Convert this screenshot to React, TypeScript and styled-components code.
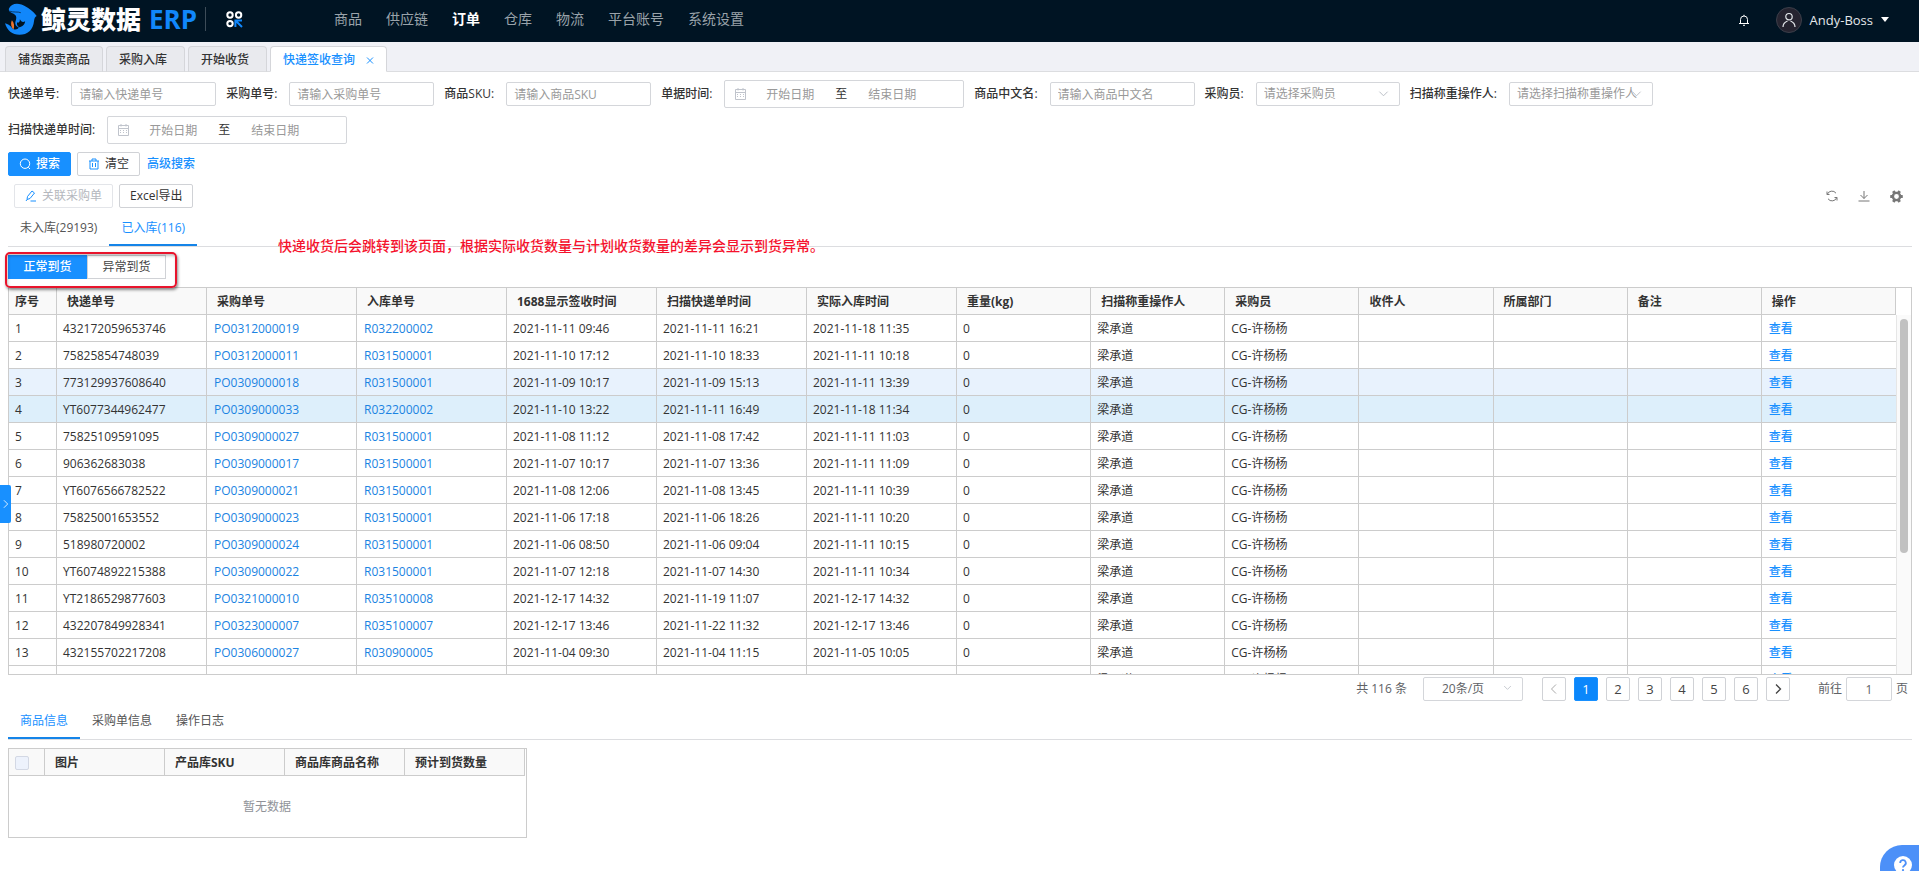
import React from "react";
import styled, { createGlobalStyle, css } from "styled-components";

const BLUE = "#1890ff";
const LINE = "#cccccc";
const FONT = `"Open Sans", "Noto Sans CJK SC", sans-serif`;

const GlobalStyle = createGlobalStyle`
  *, *::before, *::after { box-sizing: border-box; }
  body { margin: 0; background: #fff; color: #333; font: 12px/18px ${FONT}; }
  button, input, select { font: inherit; color: inherit; margin: 0; }
  button { cursor: pointer; padding: 0; background: none; border: 0; }
  a { text-decoration: none; }
  svg { display: block; flex: none; }
`;

/* ---------- header ---------- */
const Header = styled.header`
  display: flex;
  align-items: center;
  height: 42px;
  padding: 0 30px 0 5px;
  background: #001423;
  color: #fff;
`;
const Brand = styled.a`
  display: flex;
  align-items: center;
  gap: 4px;
  height: 24px;
  margin-bottom: 4px;
  padding-right: 8px;
  border-right: 1px solid #3d4c58;
  color: #fff;
  font-size: 25px;
  line-height: 24px;
  font-weight: 900;
  white-space: nowrap;
`;
const BrandAccent = styled.span`
  margin-left: 4px;
  color: #1187fb;
  font-size: 26px;
  font-weight: 700;
`;
const AppsButton = styled.button`
  margin: 0 91px 4px 20px;
`;
const Nav = styled.nav`
  display: flex;
  gap: 24px;
  margin-bottom: 4px;
`;
const NavLink = styled.a<{ $active?: boolean }>`
  font-size: 14px;
  line-height: 20px;
  white-space: nowrap;
  color: ${(p) => (p.$active ? "#fff" : "#9aa3aa")};
  font-weight: ${(p) => (p.$active ? 700 : 400)};
`;
const HeaderRight = styled.div`
  display: flex;
  align-items: center;
  gap: 26px;
  margin: 0 0 3px auto;
`;
const UserButton = styled.button`
  display: flex;
  align-items: center;
  gap: 8px;
  color: #e4e8eb;
  font-size: 13px;
`;
const Avatar = styled.span`
  display: grid;
  place-items: center;
  width: 26px;
  height: 26px;
  border: 1px solid #3c3f4a;
  border-radius: 50%;
  background: #262430;
`;
const Caret = styled.span`
  border: 4px solid transparent;
  border-top: 5px solid #fff;
  border-bottom: 0;
`;

/* ---------- page tabs ---------- */
const PageTabs = styled.div`
  display: flex;
  align-items: flex-end;
  gap: 3px;
  height: 30px;
  padding: 0 5px;
  background: #f0f1f6;
  box-shadow: inset 0 -1px #dcdde0;
`;
const PageTab = styled.button<{ $active?: boolean }>`
  display: flex;
  align-items: center;
  gap: 11px;
  min-width: 79px;
  height: 26px;
  padding: 1px 12px 0;
  border: 1px solid #d5d6da;
  border-bottom-color: #dcdde0;
  border-radius: 4px 4px 0 0;
  background: #e9eaee;
  font-weight: 500;
  white-space: nowrap;
  ${(p) =>
    p.$active &&
    css`
      background: #fff;
      border-bottom-color: #fff;
      color: ${BLUE};
    `}
`;

/* ---------- filters ---------- */
const Content = styled.main`
  padding: 8px 7px 0 8px;
`;
const Filters = styled.form`
  display: flex;
  flex-wrap: wrap;
  gap: 8px 10px;
`;
const Field = styled.div`
  display: flex;
  align-items: center;
  gap: 12px;
  height: 28px;
`;
const FieldLabel = styled.label`
  white-space: nowrap;
  font-weight: 500;
`;
const box = css`
  border: 1px solid #d4d6da;
  border-radius: 2px;
  background: #fff;
`;
const TextInput = styled.input`
  ${box}
  width: 145px;
  height: 24px;
  padding: 0 7px;
  outline: none;
  &::placeholder { color: #999; opacity: 1; }
`;
const SelectWrap = styled.span<{ $w: number }>`
  position: relative;
  width: ${(p) => p.$w}px;
  svg { position: absolute; right: 11px; top: 6px; color: #b6bac2; pointer-events: none; }
`;
const Select = styled.select<{ $center?: boolean }>`
  ${box}
  display: block;
  appearance: none;
  width: 100%;
  height: 24px;
  padding: 0 7px;
  color: ${(p) => (p.$center ? "#606266" : "#999")};
  padding-left: ${(p) => (p.$center ? 18 : 7)}px;
  outline: none;
`;
const DateRange = styled.div`
  ${box}
  display: flex;
  align-items: center;
  width: 240px;
  height: 28px;
  padding-left: 10px;
`;
const DateInput = styled.input`
  width: 78px;
  height: 24px;
  padding: 0;
  border: 0;
  outline: none;
  text-align: center;
  background: none;
  &::placeholder { color: #999; opacity: 1; }
`;
const DateIcon = styled.span`
  margin-right: 5px;
`;
const DateTo = styled.span`
  width: 24px;
  text-align: center;
`;

/* ---------- buttons ---------- */
const ButtonRow = styled.div`
  display: flex;
  align-items: center;
  gap: 6px;
  margin-top: 8px;
`;
const ActionRow = styled(ButtonRow)`
  padding: 0 9px 0 6px;
`;
const Button = styled.button<{ $primary?: boolean }>`
  display: flex;
  align-items: center;
  gap: 5px;
  height: 24px;
  padding: 0 10px;
  border: 1px solid #d0d2d6;
  border-radius: 2px;
  background: #fff;
  white-space: nowrap;
  svg { color: ${BLUE}; }
  ${(p) =>
    p.$primary &&
    css`
      border-color: ${BLUE};
      background: ${BLUE};
      color: #fff;
      font-weight: 500;
      svg { color: #fff; }
    `}
  &:disabled {
    color: #b4b7bd;
    border-color: #e3e5e9;
  }
`;
const AdvancedLink = styled.a`
  margin-left: 1px;
  color: ${BLUE};
  font-weight: 500;
`;
const Tools = styled.div`
  display: flex;
  gap: 18px;
  margin-left: auto;
  color: #777;
`;
const IconButton = styled.button`
  display: grid;
  place-items: center;
  width: 14px;
  height: 14px;
`;

/* ---------- tabs ---------- */
const TabBar = styled.div`
  position: relative;
  display: flex;
  height: 39px;
  border-bottom: 1px solid #dcdde0;
`;
const Tab = styled.button<{ $active?: boolean }>`
  height: 38px;
  padding: 3px 12px 0;
  border-bottom: 2px solid ${(p) => (p.$active ? "#1584e8" : "transparent")};
  color: ${(p) => (p.$active ? BLUE : "#555")};
  white-space: nowrap;
`;
const Note = styled.p`
  position: absolute;
  left: 270px;
  bottom: -10px;
  margin: 0;
  color: #f5122d;
  font-size: 14px;
  line-height: 20px;
  font-weight: 500;
  white-space: nowrap;
`;
const Segments = styled.div`
  position: relative;
  display: flex;
  width: 158px;
  margin: 8px 0;
`;
const Segment = styled.button<{ $active?: boolean }>`
  flex: 1;
  height: 24px;
  border: 1px solid ${(p) => (p.$active ? BLUE : "#d0d2d6")};
  background: ${(p) => (p.$active ? BLUE : "#fff")};
  color: ${(p) => (p.$active ? "#fff" : "#444")};
  font-weight: ${(p) => (p.$active ? 500 : 400)};
`;
const Highlight = styled.span`
  position: absolute;
  inset: -3px -11px -9px -3px;
  border: 2px solid #e8142c;
  border-radius: 5px;
  box-shadow: 1px 2px 3px rgba(0, 0, 0, 0.45), inset 1px 2px 3px rgba(0, 0, 0, 0.25);
  pointer-events: none;
`;

/* ---------- data table ---------- */
const Frame = styled.div`
  display: flex;
  height: 388px;
  border: 1px solid ${LINE};
`;
const Clip = styled.div`
  flex: 1;
  min-width: 0;
  overflow: hidden;
`;
const Table = styled.table`
  width: 100%;
  table-layout: fixed;
  border-collapse: separate;
  border-spacing: 0;
`;
const Th = styled.th<{ $first?: boolean }>`
  height: 27px;
  padding: 2px 0 0 ${(p) => (p.$first ? 6 : 10)}px;
  border-bottom: 1px solid ${LINE};
  border-right: 1px solid ${LINE};
  background: #f9f9f9;
  text-align: left;
  font-weight: 700;
  white-space: nowrap;
`;
const Tr = styled.tr<{ $tone?: string }>`
  background: ${(p) => p.$tone || "#fff"};
`;
const Td = styled.td<{ $link?: boolean }>`
  height: 27px;
  padding: 2px 0 0 ${(p) => (p.$link ? 7 : 6)}px;
  border-bottom: 1px solid ${LINE};
  border-right: 1px solid ${LINE};
  white-space: nowrap;
  &:last-child { border-right: 0; }
`;
const CodeLink = styled.a`
  color: #1b83e2;
`;
const ViewLink = styled.a`
  color: ${BLUE};
  font-weight: 500;
`;
const Gutter = styled.div`
  display: flex;
  flex-direction: column;
  width: 15px;
`;
const GutterHead = styled.div`
  height: 27px;
`;
const Track = styled.div`
  flex: 1;
  padding: 4px 3px 0;
  border-left: 1px solid #e6e6e6;
  background: #fafafa;
`;
const Thumb = styled.div`
  height: 234px;
  border-radius: 4px;
  background: #c1c1c1;
`;

/* ---------- pagination ---------- */
const Pagination = styled.nav`
  display: flex;
  justify-content: flex-end;
  align-items: center;
  margin-top: 2px;
  padding-right: 4px;
  color: #606266;
`;
const Pages = styled.div`
  display: flex;
  gap: 8px;
  margin: 0 28px 0 19px;
`;
const PageButton = styled.button<{ $active?: boolean }>`
  display: grid;
  place-items: center;
  width: 24px;
  height: 24px;
  border: 1px solid ${(p) => (p.$active ? BLUE : "#d0d2d6")};
  border-radius: 2px;
  background: ${(p) => (p.$active ? "#0b87fb" : "#fff")};
  color: ${(p) => (p.$active ? "#fff" : "#444")};
  font-size: 13px;
  &:disabled { color: #aaa; }
`;
const Total = styled.span`
  margin-right: 16px;
`;
const Jump = styled.label`
  display: flex;
  align-items: center;
  gap: 4px;
`;
const JumpInput = styled(TextInput)`
  width: 46px;
  text-align: center;
`;

/* ---------- detail table ---------- */
const DetailFrame = styled.div`
  width: 519px;
  margin-top: 8px;
  border: 1px solid ${LINE};
  padding-right: 1px;
  background: #fff;
`;
const EmptyCell = styled.td`
  height: 61px;
  padding: 0;
  text-align: center;
  color: #909399;
`;
const Check = styled.input`
  display: block;
  appearance: none;
  width: 14px;
  height: 14px;
  margin: 0;
  border: 1px solid #d3d8e4;
  border-radius: 2px;
  background: #edf2fc;
`;

/* ---------- floating parts ---------- */
const SideHandle = styled.button`
  position: fixed;
  left: 0;
  top: 485px;
  display: grid;
  place-items: center;
  width: 11px;
  height: 38px;
  border-radius: 0 2px 2px 0;
  background: ${BLUE};
  color: #fff;
`;
const Help = styled.button`
  position: fixed;
  right: 0;
  bottom: 0;
  width: 39px;
  height: 26px;
  padding: 11px 0 0 14px;
  border-radius: 22px 0 0 0;
  background: #4c90f8;
  overflow: hidden;
`;

/* ---------- icons ---------- */
type IconProps = { size?: number; d: string; w?: number; box?: number };
const Icon = ({ size = 12, d, w = 1, box: b = 12 }: IconProps) => (
  <svg width={size} height={size} viewBox={`0 0 ${b} ${b}`} fill="none" stroke="currentColor" strokeWidth={w} aria-hidden="true">
    <path d={d} />
  </svg>
);
const Whale = () => (
  <svg width="32" height="34" viewBox="15 6 97 102" aria-hidden="true">
    <path
      fill="#1187fb"
      d="M27 25C33 12 48 7 65 13C84 20 101 34 111 48C106 50 104 55 103 63C101 89 83 105 59 105C37 105 21 92 15 70C24 72 32 78 37 85C43 91 53 90 57 83C49 80 44 73 47 64C51 53 50 46 41 41C32 37 25 34 27 25Z"
    />
    <path fill="#001423" d="M58 82C52 79 50 73 52 67C57 70 60 66 60 58C64 65 69 69 76 64C75 74 68 81 58 82Z" />
    <path fill="none" stroke="#001423" strokeWidth="2" d="M28 33C42 38 54 34 63 38" />
    <path fill="#f0752c" d="M36 61C43 68 44 80 41 89C34 83 31 71 36 61Z" />
  </svg>
);
const AppsIcon = () => (
  <svg width="17" height="17" viewBox="0 0 17 17" fill="none" stroke="#fff" strokeWidth="2" aria-hidden="true">
    <circle cx="4" cy="4" r="2.7" />
    <circle cx="12.6" cy="4" r="2.7" />
    <circle cx="4" cy="12.6" r="2.7" />
    <path stroke="#1187fb" d="M16 16L10.5 10.5M9.4 16V9.4H16" />
  </svg>
);
const CalendarIcon = () => (
  <svg width="11" height="12" viewBox="0 0 11 12" fill="none" stroke="#c0c4cc" aria-hidden="true">
    <path d="M.5 1.5h10v10H.5zM.5 4.5h10M3 0v2.5M8 0v2.5" />
    <path d="M2 6.5h7M2 8.5h7" strokeDasharray="1 2" />
  </svg>
);
const Gear = () => (
  <svg width="13" height="13" viewBox="0 0 13 13" aria-hidden="true">
    <circle cx="6.5" cy="6.5" r="3.6" fill="none" stroke="currentColor" strokeWidth="2.4" />
    {[30, 90, 150, 210, 270, 330].map((a) => (
      <rect key={a} x="5" y="0.2" width="3" height="2.6" rx="0.6" fill="currentColor" transform={`rotate(${a} 6.5 6.5)`} />
    ))}
  </svg>
);
const ARROW_DOWN = "M1.5 4l4.5 4.5L10.500 4";

/* ---------- data ---------- */
const NAV = ["商品", "供应链", "订单", "仓库", "物流", "平台账号", "系统设置"];
const COLUMNS = ["序号", "快递单号", "采购单号", "入库单号", "1688显示签收时间", "扫描快递单时间", "实际入库时间", "重量(kg)", "扫描称重操作人", "采购员", "收件人", "所属部门", "备注", "操作"];
const WIDTHS = [48, 150, 150, 150, 150, 150, 150];
const ROWS = [
  ["432172059653746", "PO0312000019", "R032200002", "2021-11-11 09:46", "2021-11-11 16:21", "2021-11-18 11:35"],
  ["75825854748039", "PO0312000011", "R031500001", "2021-11-10 17:12", "2021-11-10 18:33", "2021-11-11 10:18"],
  ["773129937608640", "PO0309000018", "R031500001", "2021-11-09 10:17", "2021-11-09 15:13", "2021-11-11 13:39"],
  ["YT6077344962477", "PO0309000033", "R032200002", "2021-11-10 13:22", "2021-11-11 16:49", "2021-11-18 11:34"],
  ["75825109591095", "PO0309000027", "R031500001", "2021-11-08 11:12", "2021-11-08 17:42", "2021-11-11 11:03"],
  ["906362683038", "PO0309000017", "R031500001", "2021-11-07 10:17", "2021-11-07 13:36", "2021-11-11 11:09"],
  ["YT6076566782522", "PO0309000021", "R031500001", "2021-11-08 12:06", "2021-11-08 13:45", "2021-11-11 10:39"],
  ["75825001653552", "PO0309000023", "R031500001", "2021-11-06 17:18", "2021-11-06 18:26", "2021-11-11 10:20"],
  ["518980720002", "PO0309000024", "R031500001", "2021-11-06 08:50", "2021-11-06 09:04", "2021-11-11 10:15"],
  ["YT6074892215388", "PO0309000022", "R031500001", "2021-11-07 12:18", "2021-11-07 14:30", "2021-11-11 10:34"],
  ["YT2186529877603", "PO0321000010", "R035100008", "2021-12-17 14:32", "2021-11-19 11:07", "2021-12-17 14:32"],
  ["432207849928341", "PO0323000007", "R035100007", "2021-12-17 13:46", "2021-11-22 11:32", "2021-12-17 13:46"],
  ["432155702217208", "PO0306000027", "R030900005", "2021-11-04 09:30", "2021-11-04 11:15", "2021-11-05 10:05"],
  ["432155702217209", "PO0306000026", "R030900004", "2021-11-04 09:30", "2021-11-04 11:15", "2021-11-05 10:05"],
];
const TONES: Record<number, string> = { 2: "#e8f2fd", 3: "#ddeffb" };

const TextField = ({ id, label }: { id: string; label: string }) => (
  <Field>
    <FieldLabel htmlFor={id}>{label}:</FieldLabel>
    <TextInput id={id} placeholder={`请输入${label}`} />
  </Field>
);
const SelectField = ({ id, label }: { id: string; label: string }) => (
  <Field>
    <FieldLabel htmlFor={id}>{label}:</FieldLabel>
    <SelectWrap $w={144}>
      <Select id={id}>
        <option>{`请选择${label}`}</option>
      </Select>
      <Icon size={11} d={ARROW_DOWN} />
    </SelectWrap>
  </Field>
);
const DateField = ({ id, label }: { id: string; label: string }) => (
  <Field>
    <FieldLabel htmlFor={id}>{label}:</FieldLabel>
    <DateRange>
      <DateIcon><CalendarIcon /></DateIcon>
      <DateInput id={id} placeholder="开始日期" />
      <DateTo>至</DateTo>
      <DateInput aria-label={`${label}结束日期`} placeholder="结束日期" />
    </DateRange>
  </Field>
);

export default function App() {
  return (
    <>
      <GlobalStyle />
      <Header>
        <Brand href="#">
          <Whale />
          <span>鲸灵数据</span>
          <BrandAccent>ERP</BrandAccent>
        </Brand>
        <AppsButton aria-label="应用"><AppsIcon /></AppsButton>
        <Nav>
          {NAV.map((n) => (
            <NavLink key={n} href="#" $active={n === "订单"}>{n}</NavLink>
          ))}
        </Nav>
        <HeaderRight>
          <button aria-label="通知">
            <Icon d="M1 9.500h10M2.500 9.500V5.500a3.500 3.500 0 0 1 7 0v4M6 2V.8M5 11.300h2" />
          </button>
          <UserButton>
            <Avatar><Icon size={16} box={16} w={1.2} d="M8 1.500a3.200 3.200 0 1 1 0 6.400a3.200 3.200 0 1 1 0-6.400zM2 15c0-3 2-5 4.500-6M14 15c0-3-2-5-4.500-6" /></Avatar>
            Andy-Boss
            <Caret />
          </UserButton>
        </HeaderRight>
      </Header>

      <PageTabs>
        <PageTab>铺货跟卖商品</PageTab>
        <PageTab>采购入库</PageTab>
        <PageTab>开始收货</PageTab>
        <PageTab $active>
          快递签收查询
          <Icon size={8} box={8} d="M1 1.500l6 6M7 1.500l-6 6" />
        </PageTab>
      </PageTabs>

      <Content>
        <Filters>
          <TextField id="express" label="快递单号" />
          <TextField id="purchase" label="采购单号" />
          <TextField id="sku" label="商品SKU" />
          <DateField id="docTime" label="单据时间" />
          <TextField id="cnName" label="商品中文名" />
          <SelectField id="buyer" label="采购员" />
          <SelectField id="operator" label="扫描称重操作人" />
          <DateField id="scanTime" label="扫描快递单时间" />
        </Filters>

        <ButtonRow>
          <Button $primary>
            <Icon d="M6 1a4.700 4.700 0 1 1 0 9.400a4.700 4.700 0 1 1 0-9.400zM9.300 9.300l1.700 1.700" />
            搜索
          </Button>
          <Button>
            <Icon d="M1 3h10M4 3V1h4v2M2 3v8h8V3M4.500 5v4M7.500 5v4" />
            清空
          </Button>
          <AdvancedLink href="#">高级搜索</AdvancedLink>
        </ButtonRow>

        <ActionRow>
          <Button disabled>
            <Icon d="M2 9.500L2.500 6.500 7 1l2.500 2L5 8.500zM5.500 11H11M1 11l1-1.500" />
            关联采购单
          </Button>
          <Button>Excel导出</Button>
          <Tools>
            <IconButton aria-label="刷新">
              <Icon d="M1.200 4.500A5 5 0 0 1 10 3.200M10.800 7.500A5 5 0 0 1 2 8.800M1 1.500v3h2.500M11 10.500v-3H8.500" />
            </IconButton>
            <IconButton aria-label="下载">
              <Icon d="M6 1v7.500M2.500 5L6 8.500 9.500 5M.5 11h11" />
            </IconButton>
            <IconButton aria-label="设置"><Gear /></IconButton>
          </Tools>
        </ActionRow>

        <TabBar>
          <Tab>未入库(29193)</Tab>
          <Tab $active>已入库(116)</Tab>
          <Note>快递收货后会跳转到该页面，根据实际收货数量与计划收货数量的差异会显示到货异常。</Note>
        </TabBar>

        <Segments>
          <Segment $active>正常到货</Segment>
          <Segment>异常到货</Segment>
          <Highlight />
        </Segments>

        <Frame>
          <Clip>
            <Table>
              <colgroup>
                {COLUMNS.map((c, i) => <col key={c} width={WIDTHS[i]} />)}
              </colgroup>
              <thead>
                <tr>{COLUMNS.map((c, i) => <Th key={c} $first={i === 0}>{c}</Th>)}</tr>
              </thead>
              <tbody>
                {ROWS.map((r, i) => (
                  <Tr key={r[0]} $tone={TONES[i]}>
                    <Td>{i + 1}</Td>
                    <Td>{r[0]}</Td>
                    <Td $link><CodeLink href="#">{r[1]}</CodeLink></Td>
                    <Td $link><CodeLink href="#">{r[2]}</CodeLink></Td>
                    <Td>{r[3]}</Td>
                    <Td>{r[4]}</Td>
                    <Td>{r[5]}</Td>
                    <Td>0</Td>
                    <Td>梁承道</Td>
                    <Td>CG-许杨杨</Td>
                    <Td />
                    <Td />
                    <Td />
                    <Td $link><ViewLink href="#">查看</ViewLink></Td>
                  </Tr>
                ))}
              </tbody>
            </Table>
          </Clip>
          <Gutter>
            <GutterHead />
            <Track><Thumb /></Track>
          </Gutter>
        </Frame>

        <Pagination>
          <Total>共 116 条</Total>
          <SelectWrap $w={100}>
            <Select $center aria-label="每页条数"><option>20条/页</option></Select>
            <Icon size={9} d={ARROW_DOWN} />
          </SelectWrap>
          <Pages>
            <PageButton disabled aria-label="上一页"><Icon d="M8 1.500L3.500 6 8 10.500" /></PageButton>
            {[1, 2, 3, 4, 5, 6].map((n) => (
              <PageButton key={n} $active={n === 1}>{n}</PageButton>
            ))}
            <PageButton aria-label="下一页"><Icon w={1.3} d="M4 1.500L8.500 6 4 10.500" /></PageButton>
          </Pages>
          <Jump>前往<JumpInput defaultValue="1" />页</Jump>
        </Pagination>

        <TabBar>
          <Tab $active>商品信息</Tab>
          <Tab>采购单信息</Tab>
          <Tab>操作日志</Tab>
        </TabBar>

        <DetailFrame>
          <Table>
            <colgroup>
              <col width={36} />
              <col /><col /><col /><col />
            </colgroup>
            <thead>
              <tr>
                <Th $first><Check type="checkbox" aria-label="全选" /></Th>
                <Th>图片</Th>
                <Th>产品库SKU</Th>
                <Th>商品库商品名称</Th>
                <Th>预计到货数量</Th>
              </tr>
            </thead>
            <tbody>
              <tr><EmptyCell colSpan={5}>暂无数据</EmptyCell></tr>
            </tbody>
          </Table>
        </DetailFrame>
      </Content>

      <SideHandle aria-label="展开"><Icon size={10} d="M3.500 1.500L8 6l-4.500 4.500" /></SideHandle>
      <Help aria-label="帮助">
        <svg width="18" height="18" viewBox="0 0 18 18" fill="none" aria-hidden="true">
          <circle cx="9" cy="9" r="9" fill="#fff" />
          <path d="M6.200 7a2.800 2.800 0 1 1 4.200 2.400Q9 10.300 9 11.500" stroke="#4c90f8" strokeWidth="1.800" />
          <circle cx="9" cy="14" r="1.100" fill="#4c90f8" />
        </svg>
      </Help>
    </>
  );
}
